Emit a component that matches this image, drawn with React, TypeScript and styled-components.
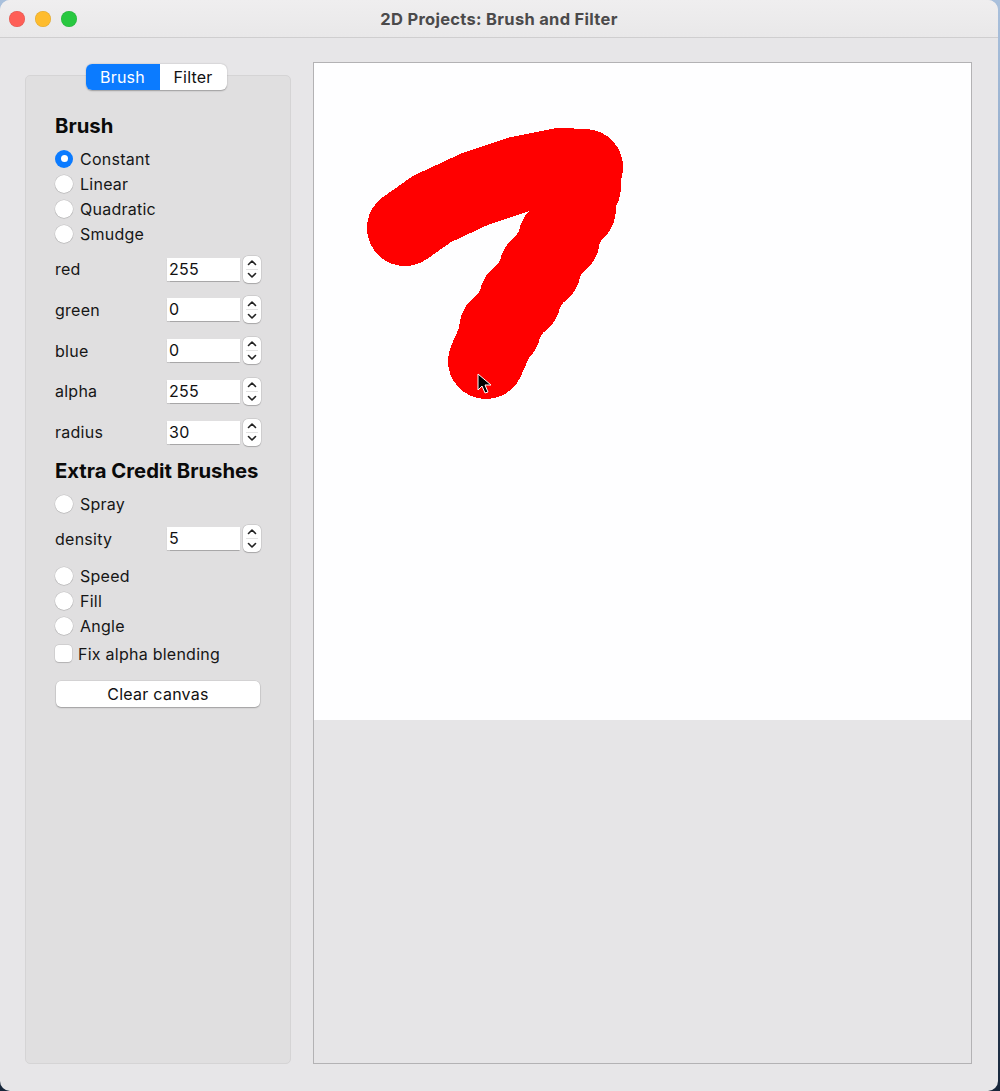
import React from "react";
import styled, { createGlobalStyle } from "styled-components";

const Global = createGlobalStyle`
  html, body { margin: 0; padding: 0; }
  body {
    background: linear-gradient(180deg, #a9c0dc 0%, #5d7aa0 60%, #17263a 100%);
    font-family: Inter, "Noto Sans", "Liberation Sans", sans-serif;
  }
`;

const Desktop = styled.div`
  width: 1000px;
  height: 1091px;
  overflow: hidden;
`;

const Window = styled.div`
  width: 998px;
  height: 1091px;
  border-radius: 10px;
  overflow: hidden;
  background: #e7e6e8;
  display: flex;
  flex-direction: column;
`;

const TitleBar = styled.div`
  height: 37px;
  flex: none;
  background: linear-gradient(180deg, #efeeef 0%, #e9e8e9 100%);
  border-bottom: 1px solid #cfcecf;
  display: flex;
  align-items: center;
  position: relative;
  padding-left: 9px;
`;

const Lights = styled.div`
  display: flex;
  gap: 10px;
`;

const Light = styled.span<{ $c: string }>`
  width: 16px;
  height: 16px;
  border-radius: 50%;
  background: ${(p) => p.$c};
  box-shadow: inset 0 0 0 0.5px rgba(0, 0, 0, 0.12);
`;

const Title = styled.div`
  position: absolute;
  left: 0;
  right: 0;
  text-align: center;
  font-size: 16.5px;
  font-weight: 700;
  letter-spacing: 0.3px;
  color: #4b4a4b;
  pointer-events: none;
`;

const Content = styled.div`
  flex: 1;
  display: flex;
  padding: 25px 26px 27px 25px;
  gap: 22px;
`;

const LeftColumn = styled.div`
  width: 266px;
  flex: none;
  display: flex;
  flex-direction: column;
  align-items: center;
  padding-top: 1px;
`;

const Segmented = styled.div`
  display: flex;
  height: 26px;
  border-radius: 6px;
  background: #fff;
  box-shadow: 0 0.5px 1.5px rgba(0, 0, 0, 0.3);
  position: relative;
  z-index: 1;
  margin-right: 4px;
`;

const Segment = styled.div<{ $active?: boolean; $w: number }>`
  width: ${(p) => p.$w}px;
  display: flex;
  align-items: center;
  justify-content: center;
  font-size: 16px;
  letter-spacing: 0.2px;
  color: ${(p) => (p.$active ? "#fff" : "#111")};
  background: ${(p) => (p.$active ? "#0b7bff" : "transparent")};
  border-radius: ${(p) => (p.$active ? "6px 0 0 6px" : "0 6px 6px 0")};
`;

const Panel = styled.div`
  align-self: stretch;
  flex: 1;
  margin-top: -15px;
  background: #e0dfe0;
  border: 1px solid #d5d4d5;
  border-radius: 5px;
  padding: 38px 0 0 29px;
  display: flex;
  flex-direction: column;
`;

const Heading = styled.div<{ $mt?: number }>`
  font-size: 20.3px;
  font-weight: 700;
  line-height: 24px;
  color: #0a0a0a;
  margin-top: ${(p) => p.$mt ?? 0}px;
  margin-bottom: 8px;
`;

const OptionRow = styled.div<{ $mt?: number }>`
  height: 25px;
  display: flex;
  align-items: center;
  gap: 7px;
  font-size: 16px;
  letter-spacing: 0.25px;
  color: #161616;
  margin-top: ${(p) => p.$mt ?? 0}px;
`;

const Radio = styled.span<{ $on?: boolean }>`
  width: 18px;
  height: 18px;
  border-radius: 50%;
  box-sizing: border-box;
  display: flex;
  align-items: center;
  justify-content: center;
  background: ${(p) => (p.$on ? "#0b7bff" : "#fff")};
  box-shadow: ${(p) =>
    p.$on ? "none" : "0 0 0 0.5px rgba(0,0,0,0.12), 0 0.5px 1px rgba(0,0,0,0.15)"};
  &::after {
    content: "";
    display: ${(p) => (p.$on ? "block" : "none")};
    width: 7px;
    height: 7px;
    border-radius: 50%;
    background: #fff;
  }
`;

const Check = styled.span`
  width: 17px;
  height: 17px;
  border-radius: 4px;
  background: #fff;
  box-shadow: 0 0 0 0.5px rgba(0, 0, 0, 0.12), 0 0.5px 1px rgba(0, 0, 0, 0.15);
  margin-right: -1px;
`;

const SpinList = styled.div<{ $mt?: number }>`
  display: flex;
  flex-direction: column;
  gap: 13.75px;
  margin-top: ${(p) => p.$mt ?? 0}px;
`;

const SpinRow = styled.div`
  height: 27px;
  display: flex;
  align-items: center;
`;

const SpinLabel = styled.span`
  width: 112px;
  font-size: 16px;
  letter-spacing: 0.25px;
  color: #161616;
`;

const SpinInput = styled.div`
  width: 73px;
  height: 23px;
  background: #fff;
  box-shadow: 0 0.5px 1px rgba(0, 0, 0, 0.25);
  font-size: 16px;
  letter-spacing: 0.25px;
  line-height: 23px;
  padding-left: 2px;
  box-sizing: border-box;
  color: #111;
`;

const Stepper = styled.div`
  margin-left: 3px;
  width: 18px;
  height: 27px;
  background: #fff;
  border-radius: 5px;
  box-shadow: 0 0 0 0.5px rgba(0, 0, 0, 0.12), 0 0.5px 1px rgba(0, 0, 0, 0.2);
  display: flex;
  flex-direction: column;
  align-items: center;
  justify-content: space-around;
  position: relative;
  &::before {
    content: "";
    position: absolute;
    left: 3px;
    right: 3px;
    top: 13px;
    height: 1px;
    background: #e3e3e3;
  }
`;

const ClearButton = styled.div`
  margin-top: 14.5px;
  margin-left: 1px;
  width: 204px;
  height: 26px;
  border-radius: 5px;
  background: #fff;
  box-shadow: 0 0 0 0.5px rgba(0, 0, 0, 0.1), 0 1px 1.5px rgba(0, 0, 0, 0.25);
  display: flex;
  align-items: center;
  justify-content: center;
  font-size: 16px;
  letter-spacing: 0.25px;
  color: #111;
`;

const CanvasFrame = styled.div`
  flex: 1;
  border: 1px solid #b3b2b4;
  background: #e6e5e7;
  display: flex;
  flex-direction: column;
  margin-top: -1px;
`;

const DrawArea = styled.div`
  height: 657px;
  background: #fefeff;
  position: relative;
`;

const Chevron = ({ up }: { up?: boolean }) => (
  <svg width="10" height="7" viewBox="0 0 10 7">
    <path
      d={up ? "M1.5 5.5 L5 2 L8.5 5.5" : "M1.5 1.5 L5 5 L8.5 1.5"}
      fill="none"
      stroke="#222"
      strokeWidth="1.6"
      strokeLinecap="round"
      strokeLinejoin="round"
    />
  </svg>
);

const Spin = ({ label, value }: { label: string; value: string }) => (
  <SpinRow>
    <SpinLabel>{label}</SpinLabel>
    <SpinInput>{value}</SpinInput>
    <Stepper>
      <Chevron up />
      <Chevron />
    </Stepper>
  </SpinRow>
);

const Option = ({ label, on, mt }: { label: string; on?: boolean; mt?: number }) => (
  <OptionRow $mt={mt}>
    <Radio $on={on} />
    {label}
  </OptionRow>
);

const strokePts =
  "91,165 118,146 161,126 206,111 246,103 271,104 261,146 245,176 226,206 206,236 186,266 172,298";

const stamps: Array<[number, number]> = [
  [266, 124],
  [261, 146],
  [245, 176],
  [226, 206],
  [206, 236],
  [186, 266],
];

export default function App() {
  return (
    <Desktop>
      <Global />
      <Window>
        <TitleBar>
          <Lights>
            <Light $c="#fe5f57" />
            <Light $c="#febc2e" />
            <Light $c="#28c840" />
          </Lights>
          <Title>2D Projects: Brush and Filter</Title>
        </TitleBar>
        <Content>
          <LeftColumn>
            <Segmented>
              <Segment $active $w={74}>Brush</Segment>
              <Segment $w={67}>Filter</Segment>
            </Segmented>
            <Panel>
              <Heading>Brush</Heading>
              <Option label="Constant" on />
              <Option label="Linear" />
              <Option label="Quadratic" />
              <Option label="Smudge" />
              <SpinList $mt={9.5}>
                <Spin label="red" value="255" />
                <Spin label="green" value="0" />
                <Spin label="blue" value="0" />
                <Spin label="alpha" value="255" />
                <Spin label="radius" value="30" />
              </SpinList>
              <Heading $mt={13.5}>Extra Credit Brushes</Heading>
              <Option label="Spray" />
              <SpinList $mt={9}>
                <Spin label="density" value="5" />
              </SpinList>
              <Option label="Speed" mt={11} />
              <Option label="Fill" />
              <Option label="Angle" />
              <OptionRow $mt={3}>
                <Check />
                Fix alpha blending
              </OptionRow>
              <ClearButton>Clear canvas</ClearButton>
            </Panel>
          </LeftColumn>
          <CanvasFrame>
            <DrawArea>
              <svg width="657" height="657" viewBox="0 0 657 657" shapeRendering="crispEdges">
                <polyline
                  points={strokePts}
                  fill="none"
                  stroke="#ff0000"
                  strokeWidth="76"
                  strokeLinecap="round"
                  strokeLinejoin="round"
                />
                {stamps.map(([x, y]) => (
                  <circle key={`${x}-${y}`} cx={x} cy={y} r="41" fill="#ff0000" />
                ))}
                <path
                  d="M164 311 L164 327 L168 323 L171 330 L174 329 L171 322 L177 322 Z"
                  fill="#000"
                  stroke="#fff"
                  strokeWidth="1"
                  shapeRendering="geometricPrecision"
                />
              </svg>
            </DrawArea>
          </CanvasFrame>
        </Content>
      </Window>
    </Desktop>
  );
}
